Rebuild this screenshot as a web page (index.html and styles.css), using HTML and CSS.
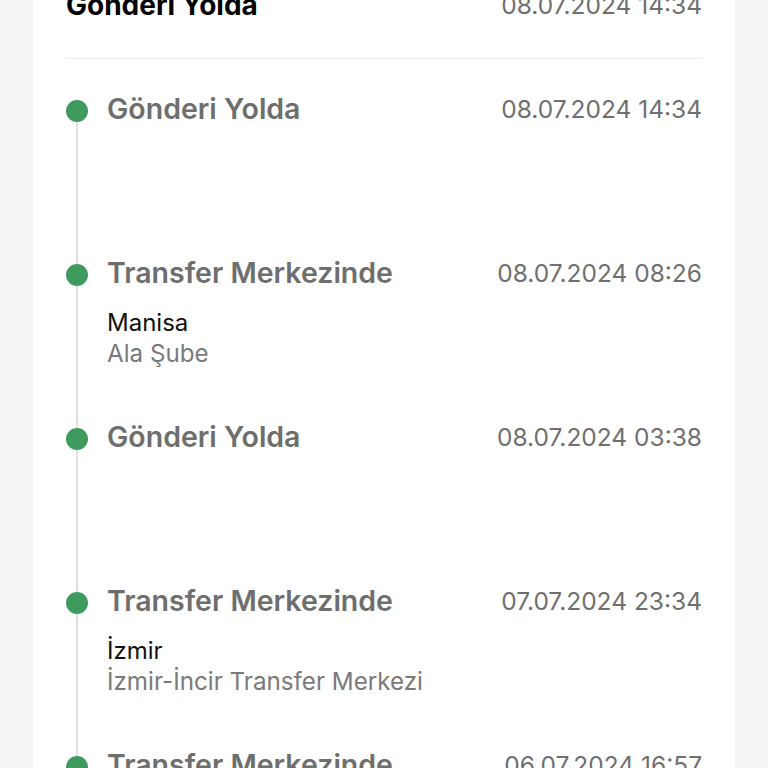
FILE: index.html
```html
<!DOCTYPE html>
<html lang="tr">
<head>
  <meta charset="UTF-8" />
  <meta name="viewport" content="width=device-width, initial-scale=1.0"/>
  <title>Gönderi Takibi</title>
  <link rel="stylesheet" href="styles.css">
</head>
<body>
  <div class="card">
    <div class="head">
      <strong class="head-title">Gönderi Yolda</strong>
      <span class="date">08.07.2024 14:34</span>
    </div>

    <div class="timeline">
      <div class="step">
        <div class="marker"><span class="dot"></span><span class="line"></span></div>
        <div class="step-body">
          <div class="row">
            <span class="title">Gönderi Yolda</span>
            <span class="date">08.07.2024 14:34</span>
          </div>
        </div>
      </div>

      <div class="step">
        <div class="marker"><span class="dot"></span><span class="line"></span></div>
        <div class="step-body">
          <div class="row">
            <span class="title">Transfer Merkezinde</span>
            <span class="date">08.07.2024 08:26</span>
          </div>
          <div class="place">Manisa</div>
          <div class="branch">Ala Şube</div>
        </div>
      </div>

      <div class="step">
        <div class="marker"><span class="dot"></span><span class="line"></span></div>
        <div class="step-body">
          <div class="row">
            <span class="title">Gönderi Yolda</span>
            <span class="date">08.07.2024 03:38</span>
          </div>
        </div>
      </div>

      <div class="step">
        <div class="marker"><span class="dot"></span><span class="line"></span></div>
        <div class="step-body">
          <div class="row">
            <span class="title">Transfer Merkezinde</span>
            <span class="date">07.07.2024 23:34</span>
          </div>
          <div class="place">İzmir</div>
          <div class="branch">İzmir-İncir Transfer Merkezi</div>
        </div>
      </div>

      <div class="step">
        <div class="marker"><span class="dot"></span><span class="line"></span></div>
        <div class="step-body">
          <div class="row">
            <span class="title">Transfer Merkezinde</span>
            <span class="date">06.07.2024 16:57</span>
          </div>
        </div>
      </div>
    </div>
  </div>
</body>
</html>
```

FILE: styles.css
```css
body {
  margin: 0;
  background: #f3f4f4;
  font-family: Inter, "Noto Sans", sans-serif;
  color: #111;
  overflow: hidden;
}
.card { background: #fff; margin: -10px 33px 0; padding: 0 33px; }
.head {
  display: flex; justify-content: space-between; align-items: center;
  line-height: 30px; padding-bottom: 38px; border-bottom: 1.5px solid #eeeeee;
}
.head-title { font-size: 28px; font-weight: 700; color: #000; }
.date { font-size: 24.5px; color: #6f6f6f; }

.timeline { padding-top: 41px; }
.step { display: flex; gap: 19px; height: 164px; }
.marker { width: 22px; display: flex; flex-direction: column; align-items: center; flex-shrink: 0; }
.dot { width: 22px; height: 22px; border-radius: 50%; background: #3f9b5d; flex-shrink: 0; }
.line { flex: 1; width: 2px; background: #e0e0e0; }
.step-body { flex: 1; margin-top: -3px; }
.row { display: flex; justify-content: space-between; align-items: center; line-height: 24px; }
.title { font-size: 28.5px; font-weight: 600; color: #6e6e6e; }
.place { margin-top: 22px; font-size: 24px; line-height: 31px; color: #111; }
.branch { font-size: 24.2px; line-height: 31px; color: #7a7a7a; }
```
